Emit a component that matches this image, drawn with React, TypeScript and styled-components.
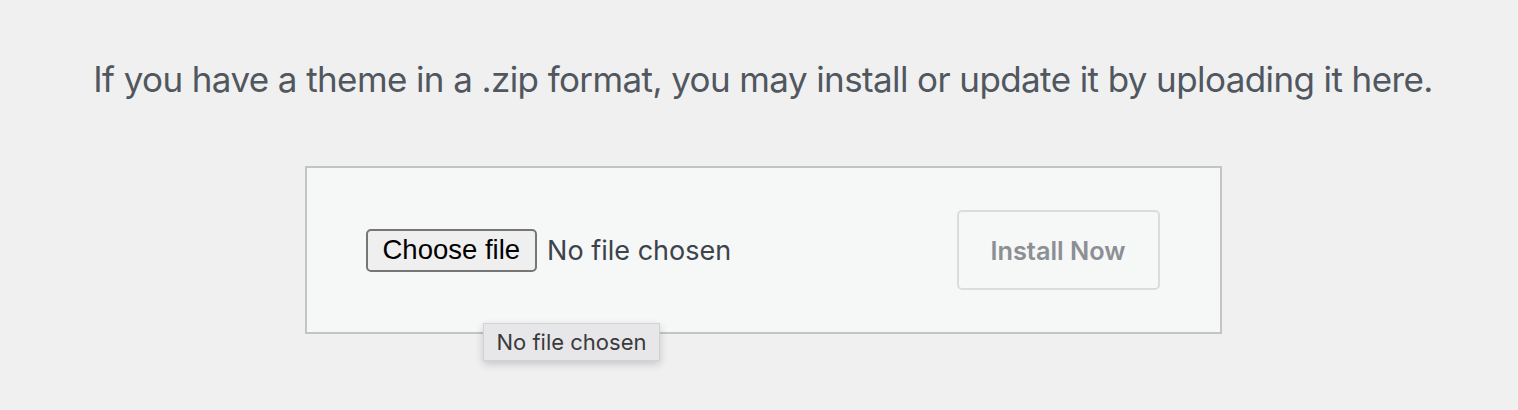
import styled, { createGlobalStyle } from "styled-components";

const GlobalStyle = createGlobalStyle`
  html, body {
    margin: 0;
    padding: 0;
    background: #f0f0f1;
  }
`;

const StyledPage = styled.div`
  box-sizing: border-box;
  min-height: 410px;
  padding: 57px 0 0 8px;
  font-family: Inter, "Noto Sans", sans-serif;
`;

const StyledHelp = styled.p`
  margin: 0 0 65px;
  text-align: center;
  font-size: 35px;
  letter-spacing: -0.6px;
  line-height: 44px;
  color: #50575e;
`;

const StyledUploadBox = styled.form`
  position: relative;
  display: flex;
  align-items: center;
  justify-content: space-between;
  box-sizing: border-box;
  width: 917px;
  height: 168px;
  margin: 0 auto;
  padding: 0 60px 0 59px;
  background: #f6f7f7;
  border: 2px solid #c3c4c7;
`;

const StyledFileField = styled.label`
  display: flex;
  align-items: center;
  gap: 10px;
`;

const StyledChooseButton = styled.span`
  box-sizing: border-box;
  display: inline-flex;
  align-items: center;
  height: 43px;
  padding: 0 15px;
  background: #efefef;
  border: 2px solid #767676;
  border-radius: 5px;
  font-family: "Liberation Sans", Arial, sans-serif;
  font-size: 27.5px;
  color: #000;
`;

const StyledFileName = styled.span`
  font-size: 27px;
  color: #3c434a;
`;

const StyledInstallButton = styled.button`
  box-sizing: border-box;
  width: 203px;
  height: 80px;
  background: #f6f7f7;
  border: 2px solid #dcdcde;
  border-radius: 5px;
  font-family: Inter, "Noto Sans", sans-serif;
  font-size: 25.3px;
  font-weight: 600;
  color: #8c8f94;
  cursor: default;
`;

const StyledTooltip = styled.div`
  position: absolute;
  left: 176px;
  top: 155px;
  box-sizing: border-box;
  height: 38px;
  padding: 0 13px;
  display: flex;
  align-items: center;
  background: #e7e7e9;
  border: 1px solid #d2d2d4;
  box-shadow: 0 3px 8px rgba(0, 0, 0, 0.18);
  font-size: 22px;
  color: #3a3a3c;
`;

function App() {
  return (
    <StyledPage>
      <GlobalStyle />
      <StyledHelp>
        If you have a theme in a .zip format, you may install or update it by
        uploading it here.
      </StyledHelp>
      <StyledUploadBox onSubmit={(e) => e.preventDefault()}>
        <StyledFileField>
          <StyledChooseButton>Choose file</StyledChooseButton>
          <StyledFileName>No file chosen</StyledFileName>
        </StyledFileField>
        <StyledInstallButton type="submit" disabled>
          Install Now
        </StyledInstallButton>
        <StyledTooltip>No file chosen</StyledTooltip>
      </StyledUploadBox>
    </StyledPage>
  );
}

export default App;
